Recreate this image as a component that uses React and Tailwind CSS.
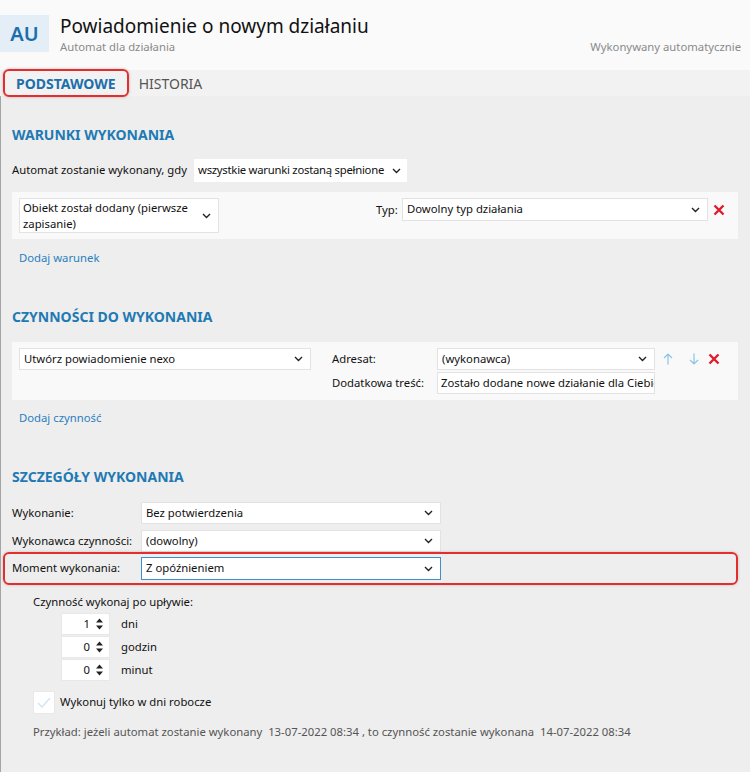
import React from "react";

const Chevron = ({ className = "" }) => (
  <svg width="9" height="6" viewBox="0 0 9 6" className={`shrink-0 ${className}`}>
    <path d="M1 1 L4.5 4.5 L8 1" fill="none" stroke="#222" strokeWidth="1.4" />
  </svg>
);

const RedX = () => (
  <svg width="12" height="12" viewBox="0 0 12 12">
    <path d="M1.5 1.5 L10.5 10.5 M10.5 1.5 L1.5 10.5" stroke="#e01b2b" strokeWidth="2.4" strokeLinecap="butt" />
  </svg>
);

const Arrow = ({ down }) => (
  <svg width="10" height="12" viewBox="0 0 10 12" style={{ transform: down ? "rotate(180deg)" : undefined }}>
    <path d="M5 11.5 V1 M1 5 L5 1 L9 5" fill="none" stroke="#8cc3e3" strokeWidth="1.2" />
  </svg>
);

const Select = ({ text, className = "", blue = false, tight = false }) => (
  <div
    className={`flex items-center justify-between bg-white border ${blue ? "border-[#3c8fd0]" : "border-[#e2e2e2]"} ${tight ? "pl-[3px] pr-[5px]" : "pl-[4px] pr-[7px]"} ${className}`}
  >
    <span className={`whitespace-nowrap text-[#111] ${tight ? "tracking-[-0.25px]" : "overflow-hidden"}`}>{text}</span>
    <Chevron className={tight ? "ml-[3px]" : "ml-[4px]"} />
  </div>
);

const Spinner = ({ value, label }) => (
  <div className="flex items-center h-[22px]">
    <div className="w-[49px] h-[22px] bg-white border border-[#e8e8e8] flex items-center justify-end pr-[6px] gap-[6px]">
      <span className="text-[#111]">{value}</span>
      <svg width="7" height="12" viewBox="0 0 7 12">
        <path d="M0 4.5 L3.5 0.5 L7 4.5 Z M0 7.5 L3.5 11.5 L7 7.5 Z" fill="#222" />
      </svg>
    </div>
    <span className="ml-[11px] text-[#111]">{label}</span>
  </div>
);

export default function App() {
  return (
    <div
      className="w-[750px] h-[772px] overflow-hidden flex flex-col text-[11.3px] text-[#111]"
      style={{ fontFamily: '"Noto Sans", "Open Sans", sans-serif' }}
    >
      {/* header */}
      <div className="h-[70px] bg-[#fafafa] flex shrink-0">
        <div className="mt-[15px] w-[49px] h-[37px] bg-[#e3eef7] flex items-center justify-center text-[#1c6fab] text-[20px] font-semibold">
          AU
        </div>
        <div className="ml-[11px] mt-[13px] flex flex-col">
          <div className="text-[19px] leading-[26px] text-[#111]">Powiadomienie o nowym działaniu</div>
          <div className="text-[11.3px] leading-[16px] text-[#8a8a8a]">Automat dla działania</div>
        </div>
        <div className="ml-auto mr-[9px] mt-[39px] text-[11.3px] leading-[16px] text-[#8a8a8a]">Wykonywany automatycznie</div>
      </div>

      {/* tabs */}
      <div className="h-[26px] bg-[#f2f2f2] flex items-center shrink-0 relative z-10">
        <div className="ml-[3px] h-[28px] px-[11px] flex items-center border-2 border-[#e42d2d] rounded-[6px] shadow-[0_0_3px_rgba(0,0,0,0.25)] text-[14px] font-bold text-[#1c6fab]">
          PODSTAWOWE
        </div>
        <div className="ml-[10px] text-[14px] text-[#555]">HISTORIA</div>
      </div>

      {/* body */}
      <div className="flex flex-1 min-h-0 bg-[#eeeeee]">
        <div className="flex-1 border-l border-[#a5a5a5] pl-[11px] pr-[16px] flex flex-col">
          {/* WARUNKI */}
          <div className="mt-[29px] h-[20px] leading-[20px] text-[14px] font-bold text-[#1f7ab4]">WARUNKI WYKONANIA</div>
          <div className="mt-[14px] flex items-center h-[23px]">
            <span className="w-[182px]">Automat zostanie wykonany, gdy</span>
            <Select text="wszystkie warunki zostaną spełnione" tight className="w-[213px] h-[23px] border-transparent" />
          </div>
          <div className="mt-[10px] h-[47px] bg-[#f9f9f9] flex items-start pl-[7px] pt-[6px]">
            <div className="w-[200px] h-[35px] bg-white border border-[#e2e2e2] flex items-center justify-between pl-[3px] pr-[7px]">
              <span className="leading-[16px]">Obiekt został dodany (pierwsze<br />zapisanie)</span>
              <Chevron />
            </div>
            <span className="w-[26px] ml-[157px] mt-[4px]">Typ:</span>
            <Select text="Dowolny typ działania" className="w-[306px] h-[23px]" />
            <div className="ml-[5px] mt-[6px]"><RedX /></div>
          </div>
          <div className="mt-[11px] ml-[7px] h-[16px] leading-[16px] text-[#2b7ec0]">Dodaj warunek</div>

          {/* CZYNNOSCI */}
          <div className="mt-[41px] h-[20px] leading-[20px] text-[14px] font-bold text-[#1f7ab4]">CZYNNOŚCI DO WYKONANIA</div>
          <div className="mt-[15px] h-[58px] bg-[#f9f9f9] flex items-start pl-[7px] pt-[6px]">
            <Select text="Utwórz powiadomienie nexo" className="w-[292px] h-[22px]" />
            <div className="ml-[21px] w-[105px] flex flex-col">
              <div className="h-[22px] flex items-center">Adresat:</div>
              <div className="h-[22px] flex items-center mt-[2px]">Dodatkowa treść:</div>
            </div>
            <div className="flex flex-col w-[218px]">
              <Select text="(wykonawca)" className="w-[218px] h-[22px]" />
              <div className="mt-[2px] h-[22px] bg-white border border-[#e2e2e2] flex items-center pl-[3px] overflow-hidden whitespace-nowrap">
                Zostało dodane nowe działanie dla Ciebie
              </div>
            </div>
            <div className="ml-[8px] mt-[5px] flex items-center gap-[16px]">
              <Arrow />
              <Arrow down />
            </div>
            <div className="ml-[9px] mt-[5px]"><RedX /></div>
          </div>
          <div className="mt-[10px] ml-[7px] h-[16px] leading-[16px] text-[#2b7ec0]">Dodaj czynność</div>

          {/* SZCZEGOLY */}
          <div className="mt-[41px] h-[20px] leading-[20px] text-[14px] font-bold text-[#1f7ab4]">SZCZEGÓŁY WYKONANIA</div>
          <div className="mt-[15px] flex items-center h-[22px]">
            <span className="w-[129px]">Wykonanie:</span>
            <Select text="Bez potwierdzenia" className="w-[300px] h-[22px]" />
          </div>
          <div className="mt-[6px] flex items-center h-[22px]">
            <span className="w-[129px]">Wykonawca czynności:</span>
            <Select text="(dowolny)" className="w-[300px] h-[22px]" />
          </div>
          <div className="-ml-[9px] w-[735px] h-[33px] border-2 border-[#e42d2d] rounded-[6px] shadow-[0_0_3px_rgba(0,0,0,0.2)] flex items-center pl-[7px]">
            <span className="w-[129px]">Moment wykonania:</span>
            <Select text="Z opóźnieniem" blue className="w-[300px] h-[23px]" />
          </div>
          <div className="mt-[9px] ml-[21px] h-[16px] leading-[16px]">Czynność wykonaj po upływie:</div>
          <div className="mt-[3px] ml-[49px] flex flex-col gap-[1px]">
            <Spinner value="1" label="dni" />
            <Spinner value="0" label="godzin" />
            <Spinner value="0" label="minut" />
          </div>
          <div className="mt-[10px] ml-[21px] flex items-center h-[23px]">
            <div className="w-[22px] h-[23px] bg-white border border-[#e8e8e8] flex items-center justify-center">
              <svg width="14" height="11" viewBox="0 0 14 11">
                <path d="M1 6 L5 10 L13 1" fill="none" stroke="#cfe4f2" strokeWidth="1.3" />
              </svg>
            </div>
            <span className="ml-[5px]">Wykonuj tylko w dni robocze</span>
          </div>
          <div className="mt-[10px] ml-[21px] h-[16px] leading-[16px] text-[#555] whitespace-nowrap">
            Przykład: jeżeli automat zostanie wykonany&nbsp; 13-07-2022 08:34 , to czynność zostanie wykonana&nbsp; 14-07-2022 08:34
          </div>
        </div>
        {/* scrollbar */}
        <div className="w-[11px] flex flex-col">
          <div className="h-[659px] bg-[#b9b9b9]"></div>
          <div className="flex-1 flex items-end justify-center pb-[5px]">
            <svg width="9" height="6" viewBox="0 0 9 6">
              <path d="M0.5 0.5 L4.5 4.5 L8.5 0.5" fill="none" stroke="#b0b0b0" strokeWidth="1.3" />
            </svg>
          </div>
        </div>
      </div>
    </div>
  );
}
